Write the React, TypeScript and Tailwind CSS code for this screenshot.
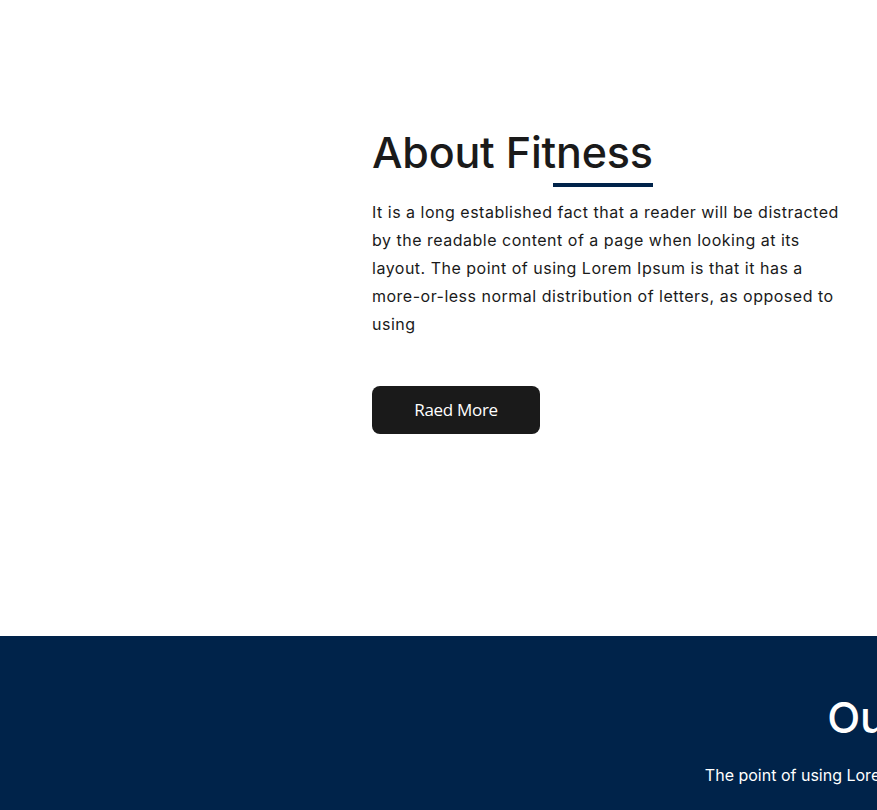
export default function App() {
  return (
    <div className="w-full overflow-hidden bg-white">
      <section className="h-[636px] flex pt-[124px]">
        <div className="w-[372px] shrink-0" />
        <div className="w-[468px] font-['Inter',sans-serif] text-[#1a1a1a]">
          <div className="inline-flex flex-col items-end">
            <h2 className="text-[43px] leading-[56px] font-medium tracking-[-0.2px]">About Fitness</h2>
            <span className="mt-[3px] block h-[4px] w-[100px] bg-[#00234a]" />
          </div>
          <p className="mt-[11px] text-[16px] leading-[28px] tracking-[0.5px]">
            It is a long established fact that a reader will be distracted by the readable content of a page when
            looking at its layout. The point of using Lorem Ipsum is that it has a more-or-less normal distribution
            of letters, as opposed to using
          </p>
          <button className="mt-[48px] h-[48px] w-[168px] rounded-[8px] bg-[#1a1a1a] text-white font-['Open_Sans',sans-serif] text-[17px] font-medium tracking-[-0.3px]">
            Raed More
          </button>
        </div>
      </section>
      <section className="h-[174px] bg-[#00234a] text-white font-['Inter',sans-serif]">
        <div className="w-[1918px] text-center pt-[53px]">
          <h2 className="text-[43px] leading-[56px] font-medium tracking-[-0.2px]">Our Services</h2>
          <p className="mt-[16px] text-[16px] leading-[28px]">
            The point of using Lorem Ipsum is that it has a more-or-less normal
          </p>
        </div>
      </section>
    </div>
  );
}
